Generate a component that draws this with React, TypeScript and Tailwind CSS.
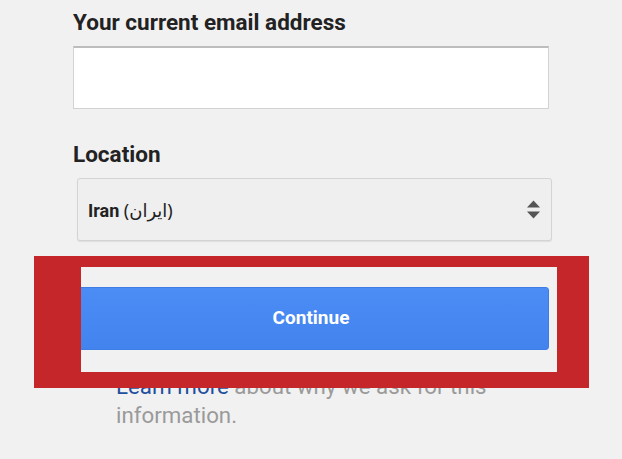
export default function App() {
  return (
    <div className="relative min-h-screen w-[622px] overflow-hidden bg-[#f1f1f1] font-['Roboto','Noto_Sans',sans-serif]">
      <div className="flex flex-col pl-[73px] pt-[8px]">
        <label className="text-[22.5px] font-bold leading-[28px] text-[#222]">
          Your current email address
        </label>
        <input
          type="email"
          className="mt-[10px] h-[63px] w-[476px] border border-[#d2d2d2] border-t-2 border-t-[#bdbdbd] bg-white outline-none"
        />

        <label className="mt-[31px] text-[22.5px] font-bold leading-[28px] text-[#222]">
          Location
        </label>
        <div className="ml-[4px] mt-[10px] flex h-[63px] w-[475px] items-center justify-between rounded-[3px] border border-[#d4d4d4] bg-[#efefef] pl-[10px] pr-[11px] shadow-[0_1px_1px_rgba(0,0,0,0.08)]">
          <span className="pt-[2px] text-[18px] text-[#222]">
            <span className="font-bold">Iran</span>{" "}
            <span className="font-['Noto_Sans','DejaVu_Sans',sans-serif] text-[18px]">(ایران)</span>
          </span>
          <svg width="13" height="19" viewBox="0 0 13 19" className="text-[#555]">
            <polygon points="0,7.5 6.5,0.5 13,7.5" fill="currentColor" />
            <polygon points="0,11.5 13,11.5 6.5,18.5" fill="currentColor" />
          </svg>
        </div>

        <button className="mt-[46px] h-[63px] w-[476px] rounded-[3px] border border-[#3f7de6] bg-gradient-to-b from-[#4b8cf5] to-[#4383ee] text-[19px] font-bold text-white">
          Continue
        </button>

        <p className="ml-[43px] mt-[22px] w-[430px] text-[22.3px] leading-[29px] text-[#9a9a9a]">
          <a className="text-[#1f4f9e]">Learn more</a> about why we ask for this
          information.
        </p>
      </div>

      {/* highlight frame drawn over the button */}
      <div className="pointer-events-none absolute left-[34px] top-[256px] h-[132px] w-[555px] border-b-[16px] border-l-[47px] border-r-[32px] border-t-[11px] border-[#c4262a]" />
    </div>
  );
}
